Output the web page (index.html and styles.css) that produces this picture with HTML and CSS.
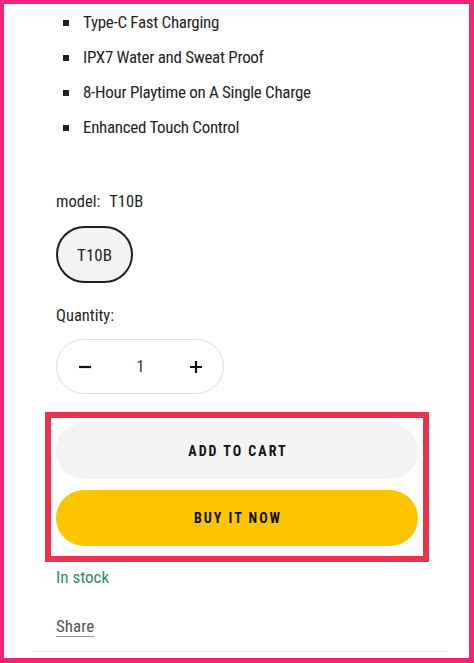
FILE: index.html
```html
<!DOCTYPE html>
<html>
<head>
<meta charset="utf-8">
<link rel="stylesheet" href="styles.css">
</head>
<body>
<div class="frame">
  <ul class="features">
    <li>Type-C Fast Charging</li>
    <li>IPX7 Water and Sweat Proof</li>
    <li>8-Hour Playtime on A Single Charge</li>
    <li>Enhanced Touch Control</li>
  </ul>
  <div class="label model-label">model:<span class="model-value">T10B</span></div>
  <div class="pill-row"><span class="pill">T10B</span></div>
  <div class="label qty-label">Quantity:</div>
  <div class="qty">
    <span class="qty-btn"><svg width="14" height="14" viewBox="0 0 14 14"><path d="M1 7h12" stroke="#121212" stroke-width="2.2"/></svg></span>
    <span class="qty-num">1</span>
    <span class="qty-btn"><svg width="14" height="14" viewBox="0 0 14 14"><path d="M1 7h12M7 1v12" stroke="#121212" stroke-width="2.2"/></svg></span>
  </div>
  <div class="highlight">
    <button class="btn btn-cart">ADD TO CART</button>
    <button class="btn btn-buy">BUY IT NOW</button>
  </div>
  <div class="stock">In stock</div>
  <div class="share-row"><a class="share">Share</a></div>
  <div class="divider"></div>
</div>
</body>
</html>
```
FILE: styles.css
```css
* { box-sizing: border-box; }
html, body { margin: 0; padding: 0; background: #fff; }
body {
  font-family: Roboto, "Liberation Sans", sans-serif;
  font-stretch: 77%;
  color: #222;
}
.frame {
  width: 474px;
  height: 663px;
  border-style: solid;
  border-color: #f5237a;
  border-width: 4px 5px 5px 4px;
  padding: 1px 0 0 52px;
  overflow: hidden;
  display: flex;
  flex-direction: column;
  align-items: flex-start;
}
.features {
  list-style: none;
  margin: 0;
  padding: 0;
}
.features li {
  position: relative;
  height: 35px;
  line-height: 35px;
  font-size: 17px;
  letter-spacing: -0.3px;
  padding-left: 27px;
  color: #1f1f1f;
}
.features li::before {
  content: "";
  position: absolute;
  left: 7px;
  top: 15px;
  width: 6px;
  height: 6px;
  background: #222;
}
.label {
  font-size: 16.5px;
  line-height: 20px;
  color: #1f1f1f;
}
.model-label { margin-top: 47px; }
.model-value { margin-left: 9px; }
.pill-row { margin-top: 14px; }
.pill {
  display: flex;
  align-items: center;
  justify-content: center;
  width: 77px;
  height: 57px;
  border: 2px solid #1f1f1f;
  border-radius: 29px;
  background: #f3f3f3;
  font-size: 17px;
  color: #1f1f1f;
}
.qty-label { margin-top: 23px; }
.qty {
  margin-top: 13px;
  width: 168px;
  height: 55px;
  border: 1px solid #dcdcdc;
  border-radius: 28px;
  display: flex;
  align-items: center;
  justify-content: space-between;
  padding: 0 20px 0 21px;
}
.qty-btn { display: flex; width: 14px; height: 14px; }
.qty-num { font-size: 16px; color: #333; }
.highlight {
  margin-top: 18px;
  margin-left: -11px;
  width: 384px;
  border: 6px solid #ea344f;
  padding: 5px 5px 10px 5px;
  display: flex;
  flex-direction: column;
  gap: 11px;
}
.btn {
  width: 362px;
  height: 56px;
  border: none;
  border-radius: 28px;
  font-family: Roboto, "Liberation Sans", sans-serif;
  font-stretch: 77%;
  font-weight: 700;
  font-size: 14px;
  letter-spacing: 2px;
  color: #111;
  padding: 0 0 0 2px;
}
.btn-cart { background: #f3f3f3; }
.btn-buy { background: #fdc500; }
.stock {
  margin-top: 5px;
  font-size: 17px;
  line-height: 20px;
  color: #2d8a6a;
}
.share-row { margin-top: 29px; }
.share {
  font-size: 17px;
  line-height: 20px;
  color: #555;
  text-decoration: underline;
  text-decoration-color: #999;
  text-underline-offset: 4px;
}
.divider {
  margin-top: 15px;
  margin-left: -24px;
  width: 417px;
  height: 1px;
  background: #f0f0f0;
}
```
